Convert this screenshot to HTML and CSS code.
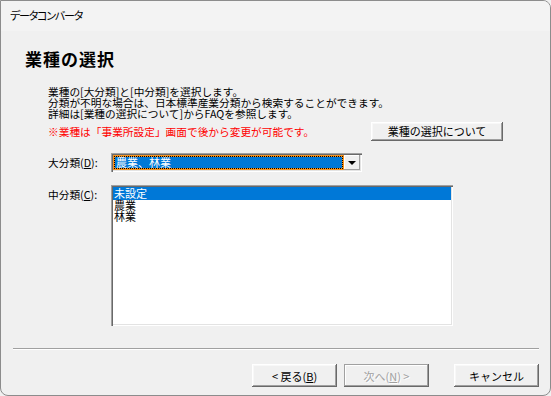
FILE: index.html
```html
<!DOCTYPE html>
<html lang="ja">
<head>
    <meta charset="UTF-8">
    <title>データコンバータ</title>
    <link rel="stylesheet" href="styles.css">
</head>
<body>
    <div class="window">
        <div class="titlebar">データコンバータ</div>

        <div class="page">
            <h1>業種の選択</h1>

            <div class="desc">
                <p>業種の[大分類]と[中分類]を選択します。</p>
                <p>分類が不明な場合は、日本標準産業分類から検索することができます。</p>
                <p>詳細は[業種の選択について]からFAQを参照します。</p>
                <div class="note-row">
                    <span class="note">※業種は「事業所設定」画面で後から変更が可能です。</span>
                    <button class="btn btn-help">業種の選択について</button>
                </div>
            </div>

            <div class="field">
                <label class="field-label">大分類(<u>D</u>):</label>
                <div class="combo">
                    <div class="combo-value">
                        <span class="combo-sel">農業、林業</span>
                    </div>
                    <div class="combo-btn"><span class="arrow"></span></div>
                </div>
            </div>

            <div class="field field-list">
                <label class="field-label">中分類(<u>C</u>):</label>
                <ul class="listbox">
                    <li class="selected">未設定</li>
                    <li>農業</li>
                    <li>林業</li>
                </ul>
            </div>
        </div>

        <div class="footer">
            <div class="separator"></div>
            <div class="buttons">
                <button class="btn">&lt; 戻る(<u>B</u>)</button>
                <button class="btn" disabled>次へ(<u>N</u>) &gt;</button>
                <button class="btn btn-cancel">キャンセル</button>
            </div>
        </div>
    </div>
</body>
</html>
```

FILE: styles.css
```css
body {
    margin: 0;
    background: #f0f0f0;
    font-family: "Noto Sans CJK JP", "Noto Sans", sans-serif;
    color: #000;
}
.window {
    width: 551px;
    height: 396px;
    box-sizing: border-box;
    border: 1px solid #8c8c8c;
    border-radius: 0 8px 8px 8px;
    background: #f0f0f0;
    overflow: hidden;
    display: flex;
    flex-direction: column;
}
.titlebar {
    height: 30px;
    line-height: 28px;
    padding-left: 9px;
    background: #f3f3f3;
    font-size: 11px;
    font-feature-settings: "palt";
    letter-spacing: -1.2px;
}
.page {
    flex: 1;
    padding-left: 47px;
}
h1 {
    margin: 17px 0 0 -23px;
    font-size: 17px;
    line-height: 22px;
    font-weight: bold;
    letter-spacing: 1px;
}
.desc {
    width: 455px;
    margin-top: 16px;
    font-size: 10.7px;
    line-height: 11px;
}
.desc p {
    margin: 0;
}
.note-row {
    display: flex;
    align-items: center;
    margin-top: 3px;
}
.note {
    color: #ff0000;
}
.btn {
    font-family: "Noto Sans CJK JP", "Noto Sans", sans-serif;
    font-size: 11px;
    height: 23px;
    width: 85px;
    padding: 0;
    border: none;
    background: #f0f0f0;
    color: #000;
    box-shadow: inset -1px -1px #696969, inset 1px 1px #ffffff,
                inset -2px -2px #a0a0a0, inset 2px 2px #f8f8f8;
}
.btn:disabled {
    color: #a0a0a0;
    text-shadow: 1px 1px #ffffff;
    box-shadow: inset -1px -1px #696969, inset 1px 1px #a0a0a0,
                inset -2px -2px #a0a0a0, inset 2px 2px #ffffff;
}
.btn-help {
    margin-left: auto;
    width: 132px;
    height: 19px;
    font-size: 11px;
    line-height: 17px;
}
.field {
    display: flex;
    align-items: center;
    margin-top: 12px;
    font-size: 10.7px;
}
.field-label {
    width: 63px;
}
.combo {
    width: 251px;
    height: 19px;
    box-sizing: border-box;
    padding: 2px;
    background: #ffffff;
    box-shadow: inset 1px 1px #a0a0a0, inset 2px 2px #696969,
                inset -1px -1px #ffffff, inset -2px -2px #e3e3e3;
    display: flex;
}
.combo-value {
    flex: 1;
    padding: 1px;
    background: #f7931e;
    display: flex;
}
.combo-sel {
    flex: 1;
    border: 1px dotted #000;
    background: #0078d7;
    background-clip: padding-box;
    color: #ffffff;
    font-size: 11px;
    line-height: 11px;
    padding-left: 1px;
}
.combo-btn {
    width: 16px;
    background: #f0f0f0;
    box-shadow: inset -1px -1px #a0a0a0, inset 1px 1px #ffffff;
    display: flex;
    align-items: center;
    justify-content: center;
}
.arrow {
    width: 0;
    height: 0;
    border-left: 4px solid transparent;
    border-right: 4px solid transparent;
    border-top: 4px solid #000;
    margin-top: 1px;
}
.field-list {
    align-items: flex-start;
    margin-top: 13px;
}
.field-list .field-label {
    margin-top: 2px;
}
.listbox {
    width: 342px;
    height: 141px;
    box-sizing: border-box;
    margin: 0;
    padding: 2px 2px;
    list-style: none;
    background: #ffffff;
    box-shadow: inset 1px 1px #a0a0a0, inset 2px 2px #696969,
                inset -1px -1px #ffffff, inset -2px -2px #e3e3e3;
    font-size: 11px;
    line-height: 11px;
}
.listbox li {
    padding-left: 1px;
}
.listbox li.selected {
    background: #0078d7;
    color: #ffffff;
    line-height: 13px;
}
.footer {
    padding: 0 11px 8px 12px;
}
.separator {
    height: 1px;
    background: #a0a0a0;
    border-bottom: 1px solid #ffffff;
}
.buttons {
    display: flex;
    justify-content: flex-end;
    margin-top: 14px;
}
.buttons .btn + .btn {
    margin-left: 7px;
}
.buttons .btn + .btn-cancel {
    margin-left: 25px;
}
```
